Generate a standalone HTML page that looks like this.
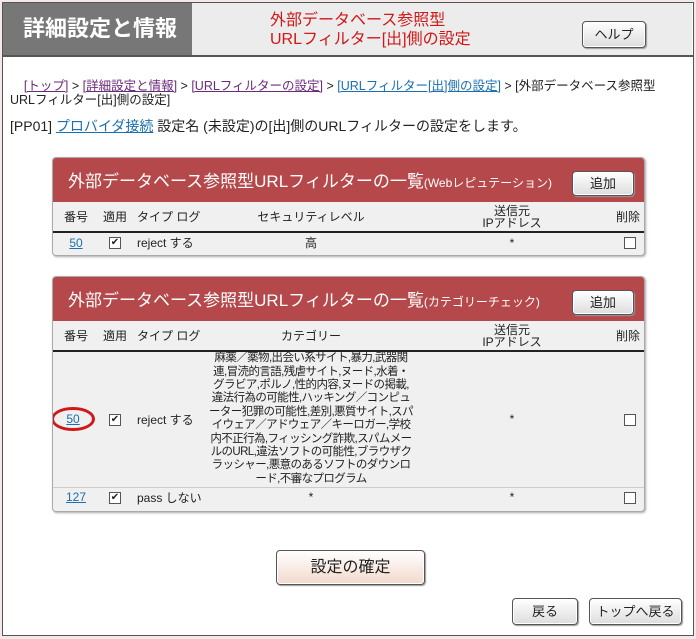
<!DOCTYPE html>
<html><head><meta charset="utf-8"><style>
*{margin:0;padding:0;box-sizing:border-box}
body{width:696px;height:639px;background:#f3e9e6;font-family:"Liberation Sans","Noto Sans CJK JP",sans-serif;position:relative;overflow:hidden;color:#222}
.frame{position:absolute;left:2px;top:2px;width:692px;height:634px;background:#fff;border:1px solid #555}
.hl{position:absolute;left:3px;top:3px;width:189px;height:52px;background:#777;color:#fff;font-size:22px;font-weight:bold;line-height:52px;padding-left:20px}
.hr{position:absolute;left:192px;top:3px;width:500px;height:52px;background:#ececec}
.hline{position:absolute;left:3px;top:55px;width:690px;height:2px;background:#555}
.htitle{position:absolute;left:270px;top:11px;color:#d01818;font-size:16px;line-height:19px}
.btn{position:absolute;border:1px solid #555;border-radius:4px;background:linear-gradient(#fff,#ddd);box-shadow:inset 0 0 0 1px #fff,1px 1px 1px #999;font-size:13px;text-align:center;color:#222}
a{color:#1a6fb0}
.bc{position:absolute;left:10px;top:79px;font-size:12.5px;line-height:14px;width:680px}
.pv{color:#6a2a7a}
.pp{position:absolute;left:10px;top:116px;font-size:14px}
.panel{position:absolute;left:52px;width:593px;background:#f0f0f0;border:1px solid #aaa;border-radius:4px;box-shadow:1px 1px 2px #aaa;overflow:hidden}
.ph{background:#b5484a;height:44px;color:#fff;font-size:17px;line-height:48px;padding-left:15px;position:relative}
.ph small{font-size:12px}
.ph .btn{top:13px;right:10px;width:62px;height:25px;line-height:23px;font-size:13px}
table{border-collapse:collapse;width:100%;font-size:12px;table-layout:fixed}
th{font-weight:normal;height:30px;border-bottom:2px solid #222;line-height:12px}
td{text-align:center}
.cb{display:inline-block;width:12px;height:12px;border:1px solid #555;background:#fff;font-size:10px;line-height:10px;vertical-align:middle}
</style></head><body>
<div class="frame"></div>
<div class="hl">詳細設定と情報</div>
<div class="hr"></div>
<div class="hline"></div>
<div class="htitle">外部データベース参照型<br>URLフィルター[出]側の設定</div>
<div class="btn" style="left:582px;top:21px;width:64px;height:27px;line-height:25px">ヘルプ</div>
<div class="bc">&nbsp;&nbsp;&nbsp;&nbsp;<a class="pv" href="#">[トップ]</a> &gt; <a class="pv" href="#">[詳細設定と情報]</a> &gt; <a class="pv" href="#">[URLフィルターの設定]</a> &gt; <a href="#">[URLフィルター[出]側の設定]</a> &gt; [外部データベース参照型<br>URLフィルター[出]側の設定]</div>
<div class="pp">[PP01] <a href="#">プロバイダ接続</a> 設定名 (未設定)の[出]側のURLフィルターの設定をします。</div>

<div class="panel" style="top:157px;height:99px">
<div class="ph">外部データベース参照型URLフィルターの一覧<small>(Webレピュテーション)</small><div class="btn">追加</div></div>
<table><tr><th style="width:46px">番号</th><th style="width:32px">適用</th><th style="width:75px;text-align:left;padding-left:6px">タイプ ログ</th><th style="width:210px">セキュリティレベル</th><th style="width:192px">送信元<br>IPアドレス</th><th style="text-align:right;padding-right:4px">削除</th></tr>
<tr style="height:20px"><td><a href="#">50</a></td><td><span class="cb">✔</span></td><td style="text-align:left;padding-left:6px">reject する</td><td>高</td><td>*</td><td style="text-align:right;padding-right:8px"><span class="cb"></span></td></tr></table>
</div>

<div class="panel" style="top:276px;height:236px">
<div class="ph">外部データベース参照型URLフィルターの一覧<small>(カテゴリーチェック)</small><div class="btn">追加</div></div>
<table><tr><th style="width:46px">番号</th><th style="width:32px">適用</th><th style="width:75px;text-align:left;padding-left:6px">タイプ ログ</th><th style="width:210px">カテゴリー</th><th style="width:192px">送信元<br>IPアドレス</th><th style="text-align:right;padding-right:4px">削除</th></tr>
<tr style="height:136px;border-bottom:1px solid #ccc"><td><a href="#" style="display:inline-block;border:3px solid #d01818;border-radius:50%;padding:2px 12px;margin-left:-6px">50</a></td><td><span class="cb">✔</span></td><td style="text-align:left;padding-left:6px">reject する</td><td style="line-height:13.4px;letter-spacing:-0.6px;font-size:11.5px;padding:0 2px">麻薬／薬物,出会い系サイト,暴力,武器関連,冒涜的言語,残虐サイト,ヌード,水着・グラビア,ポルノ,性的内容,ヌードの掲載,違法行為の可能性,ハッキング／コンピューター犯罪の可能性,差別,悪質サイト,スパイウェア／アドウェア／キーロガー,学校内不正行為,フィッシング詐欺,スパムメールのURL,違法ソフトの可能性,ブラウザクラッシャー,悪意のあるソフトのダウンロード,不審なプログラム</td><td>*</td><td style="text-align:right;padding-right:8px"><span class="cb"></span></td></tr>
<tr style="height:20px"><td><a href="#">127</a></td><td><span class="cb">✔</span></td><td style="text-align:left;padding-left:6px">pass しない</td><td>*</td><td>*</td><td style="text-align:right;padding-right:8px"><span class="cb"></span></td></tr></table>
</div>

<div class="btn" style="left:276px;top:550px;width:149px;height:35px;line-height:33px;font-size:16px;background:linear-gradient(#fff,#f3d9cc)">設定の確定</div>
<div class="btn" style="left:512px;top:598px;width:66px;height:27px;line-height:25px">戻る</div>
<div class="btn" style="left:589px;top:598px;width:93px;height:27px;line-height:25px">トップへ戻る</div>
</body></html>
